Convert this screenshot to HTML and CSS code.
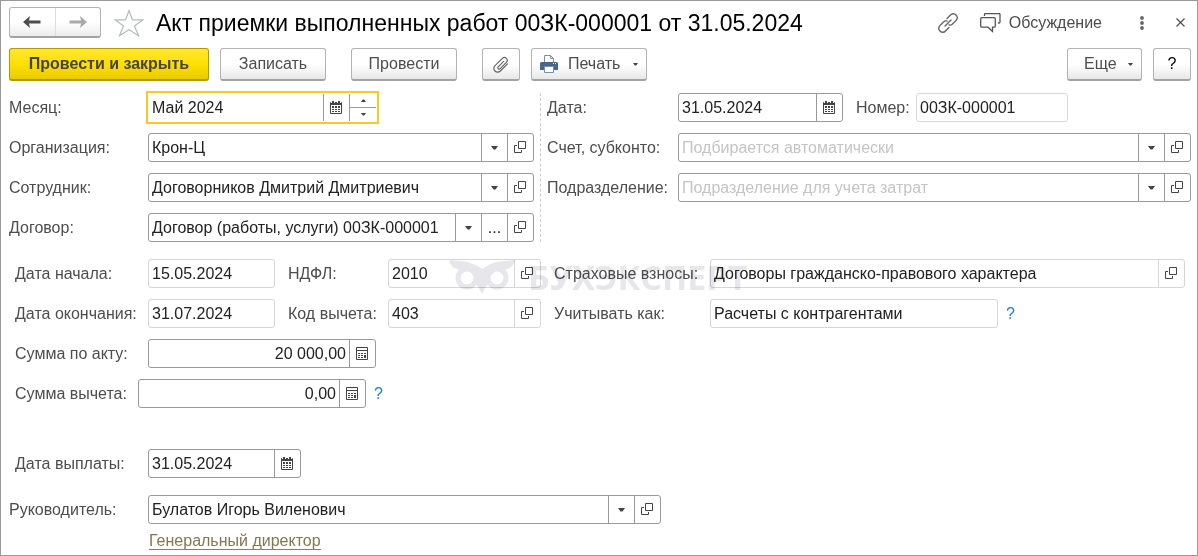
FILE: index.html
```html
<!DOCTYPE html>
<html lang="ru">
<head>
  <meta charset="UTF-8" />
  <meta name="viewport" content="width=device-width, initial-scale=1.0"/>
  <title>Акт приемки выполненных работ</title>
  <link rel="stylesheet" href="styles.css">
</head>
<body>
  <!-- shared icons -->
  <svg class="sprite" aria-hidden="true">
    <symbol id="i-calendar" viewBox="0 0 13 13">
      <path d="M1 1h10a1 1 0 0 1 1 1v10a1 1 0 0 1-1 1H1a1 1 0 0 1-1-1V2a1 1 0 0 1 1-1zM1 4v8h10V4z" fill="#444" fill-rule="evenodd"/>
      <path d="M2 0h2v2H2zM8 0h2v2H8z" fill="#444"/>
      <path d="M1 1h1v1H1zM4 1h1v1H4zM7 1h1v1H7zM10 1h1v1h-1z" fill="#fff"/>
      <path d="M2 5h2v2H2zM5 5h2v2H5zM8 5h2v2H8zM2 8h2v1H2zM5 8h2v1H5zM8 8h2v1H8zM2 10h2v1H2zM5 10h2v1H5zM8 10h2v1H8z" fill="#444"/>
    </symbol>
    <symbol id="i-calc" viewBox="0 0 13 13">
      <path d="M.5.500h11v12H.500z" fill="#fff" stroke="#444"/>
      <path d="M1 3h10v1H1zM2 6h2v1H2zM5 6h2v1H5zM8 6h2v1H8zM2 8h2v1H2zM5 8h2v1H5zM8 8h2v3H8zM2 10h2v1H2zM5 10h2v1H5z" fill="#444"/>
    </symbol>
    <symbol id="i-open" viewBox="0 0 13 13">
      <path d="M4.500.500h7v7h-7zM3 4.500H.500v7h7V9" fill="none" stroke="#444"/>
    </symbol>
    <symbol id="i-down" viewBox="0 0 7 4">
      <path d="M0 0h7L4.500 3.500h-2z" fill="#444"/>
    </symbol>
    <symbol id="i-arrow" viewBox="0 0 18 14">
      <path d="M0 7l7-6L6 5.500h11.500v3H6L7 13z" fill="currentColor"/>
    </symbol>
  </svg>

  <main class="window">
    <header class="titlebar">
      <div class="history">
        <button type="button" aria-label="Назад"><svg width="18" height="14"><use href="#i-arrow"/></svg></button>
        <button type="button" class="forward" aria-label="Вперед"><svg width="18" height="14"><use href="#i-arrow"/></svg></button>
      </div>
      <button type="button" class="plain star" aria-label="В избранное">
        <svg width="30" height="28" viewBox="0 0 30 28"><path d="M15 1.500l3.400 9.300h10.600l-8.600 6.100 4.200 9.800L15 20.700l-9.600 6 4.200-9.800L1 10.800h10.600z" fill="#fff" stroke="#b4bac2" stroke-width="1.200"/></svg>
      </button>
      <h1>Акт приемки выполненных работ 00ЗК-000001 от 31.05.2024</h1>
      <div class="title-tools">
        <button type="button" class="plain" aria-label="Ссылка">
          <svg width="20" height="20" viewBox="0 0 20 20" fill="none" stroke="#666" stroke-width="1.400" stroke-linecap="round"><path d="M9 5.500l3.500-3.500a3.600 3.600 0 0 1 5.500 0 3.600 3.600 0 0 1 0 5.500L14.500 11a3.600 3.600 0 0 1-3.500 1M11 14.500L7.500 18A3.600 3.600 0 0 1 2 18a3.600 3.600 0 0 1 0-5.500L5.500 9A3.600 3.600 0 0 1 9 8M7 13l6-6"/></svg>
        </button>
        <button type="button" class="plain talk">
          <svg width="21" height="20" viewBox="0 0 21 20" fill="none" stroke="#555" stroke-width="1.300"><path d="M4.500 3V1.500a1 1 0 0 1 1-1H19a1 1 0 0 1 1 1V9a1 1 0 0 1-1 1h-1"/><path d="M2 4.600h12a1.300 1.300 0 0 1 1.300 1.300v7a1.300 1.300 0 0 1-1.300 1.300h-1.500v4.300L8 14.200H2A1.300 1.300 0 0 1 .700 12.900v-7A1.300 1.300 0 0 1 2 4.600z"/></svg>
          Обсуждение
        </button>
        <button type="button" class="plain dots" aria-label="Меню">
          <svg width="4" height="14" viewBox="0 0 4 14" fill="#666"><circle cx="2" cy="2" r="1.900"/><circle cx="2" cy="7" r="1.900"/><circle cx="2" cy="12" r="1.900"/></svg>
        </button>
        <button type="button" class="plain close" aria-label="Закрыть">
          <svg width="9" height="9" viewBox="0 0 9 9" stroke="#555" stroke-width="1.300"><path d="M.5.500l8 8M8.500.500l-8 8"/></svg>
        </button>
      </div>
    </header>

    <div class="toolbar">
      <button type="button" class="btn primary">Провести и закрыть</button>
      <button type="button" class="btn">Записать</button>
      <button type="button" class="btn spaced">Провести</button>
      <button type="button" class="btn icon spaced" aria-label="Файлы">
        <svg width="16" height="17" viewBox="0 0 16 17" fill="none" stroke="#666" stroke-width="1.200" stroke-linecap="round"><path d="M10.600 5.400l-5.400 5.400a1.300 1.300 0 0 0 2 1.800l6.200-6.300a2.800 2.800 0 0 0-4-4L2 9.600a3.800 3.800 0 0 0 5.400 5.400l7.100-7.200"/></svg>
      </button>
      <button type="button" class="btn print">
        <svg width="18" height="18" viewBox="0 0 18 18"><path d="M4.500 8V.500h6l3 3V8" fill="#fff" stroke="#7b8ea3"/><path d="M10.500.500v3h3" fill="none" stroke="#7b8ea3"/><path d="M1.500 7h15A1.500 1.500 0 0 1 18 8.500V15H0V8.500A1.500 1.500 0 0 1 1.500 7z" fill="#44688f"/><path d="M13 8h1v1h-1zM15 8h1v1h-1z" fill="#fff"/><path d="M4.500 11.500h9v6h-9z" fill="#fff" stroke="#7b8ea3"/></svg>
        <span>Печать</span>
        <svg class="caret" width="5" height="3" viewBox="0 0 7 4"><use href="#i-down"/></svg>
      </button>
      <button type="button" class="btn more">
        <span>Еще</span>
        <svg class="caret" width="5" height="3" viewBox="0 0 7 4"><use href="#i-down"/></svg>
      </button>
      <button type="button" class="btn icon help">?</button>
    </div>

    <form>
      <div class="columns">
        <div class="col left">
          <div class="row">
            <label for="month">Месяц:</label>
            <div class="field month focused">
              <input type="text" id="month" value="Май 2024">
              <button type="button" aria-label="Календарь"><svg width="13" height="13"><use href="#i-calendar"/></svg></button>
              <div class="spin">
                <button type="button" aria-label="Больше"><svg class="up" width="5" height="3" viewBox="0 0 7 4"><use href="#i-down"/></svg></button>
                <button type="button" aria-label="Меньше"><svg width="5" height="3" viewBox="0 0 7 4"><use href="#i-down"/></svg></button>
              </div>
            </div>
          </div>
          <div class="row">
            <label for="org">Организация:</label>
            <div class="field wide">
              <input type="text" id="org" value="Крон-Ц">
              <button type="button" aria-label="Выбрать"><svg width="7" height="4"><use href="#i-down"/></svg></button>
              <button type="button" aria-label="Открыть"><svg width="13" height="13"><use href="#i-open"/></svg></button>
            </div>
          </div>
          <div class="row">
            <label for="employee">Сотрудник:</label>
            <div class="field wide">
              <input type="text" id="employee" value="Договорников Дмитрий Дмитриевич">
              <button type="button" aria-label="Выбрать"><svg width="7" height="4"><use href="#i-down"/></svg></button>
              <button type="button" aria-label="Открыть"><svg width="13" height="13"><use href="#i-open"/></svg></button>
            </div>
          </div>
          <div class="row">
            <label for="contract">Договор:</label>
            <div class="field wide">
              <input type="text" id="contract" value="Договор (работы, услуги) 00ЗК-000001">
              <button type="button" aria-label="Выбрать"><svg width="7" height="4"><use href="#i-down"/></svg></button>
              <button type="button" aria-label="Показать все">...</button>
              <button type="button" aria-label="Открыть"><svg width="13" height="13"><use href="#i-open"/></svg></button>
            </div>
          </div>
        </div>

        <div class="col right">
          <div class="row">
            <label for="date">Дата:</label>
            <div class="field date">
              <input type="text" id="date" value="31.05.2024">
              <button type="button" aria-label="Календарь"><svg width="13" height="13"><use href="#i-calendar"/></svg></button>
            </div>
            <label for="number" class="inline">Номер:</label>
            <div class="field number readonly">
              <input type="text" id="number" value="00ЗК-000001" readonly>
            </div>
          </div>
          <div class="row">
            <label for="account">Счет, субконто:</label>
            <div class="field wide">
              <input type="text" id="account" placeholder="Подбирается автоматически">
              <button type="button" aria-label="Выбрать"><svg width="7" height="4"><use href="#i-down"/></svg></button>
              <button type="button" aria-label="Открыть"><svg width="13" height="13"><use href="#i-open"/></svg></button>
            </div>
          </div>
          <div class="row">
            <label for="department">Подразделение:</label>
            <div class="field wide">
              <input type="text" id="department" placeholder="Подразделение для учета затрат">
              <button type="button" aria-label="Выбрать"><svg width="7" height="4"><use href="#i-down"/></svg></button>
              <button type="button" aria-label="Открыть"><svg width="13" height="13"><use href="#i-open"/></svg></button>
            </div>
          </div>
        </div>
      </div>

      <div class="details">
        <div class="grid">
          <label for="start">Дата начала:</label>
          <div class="field readonly"><input type="text" id="start" value="15.05.2024" readonly></div>
          <label for="ndfl" class="next">НДФЛ:</label>
          <div class="field readonly">
            <input type="text" id="ndfl" value="2010" readonly>
            <button type="button" aria-label="Открыть"><svg width="13" height="13"><use href="#i-open"/></svg></button>
          </div>
          <label for="insurance" class="next">Страховые взносы:</label>
          <div class="field readonly">
            <input type="text" id="insurance" value="Договоры гражданско-правового характера" readonly>
            <button type="button" aria-label="Открыть"><svg width="13" height="13"><use href="#i-open"/></svg></button>
          </div>

          <label for="end">Дата окончания:</label>
          <div class="field readonly"><input type="text" id="end" value="31.07.2024" readonly></div>
          <label for="code" class="next">Код вычета:</label>
          <div class="field readonly">
            <input type="text" id="code" value="403" readonly>
            <button type="button" aria-label="Открыть"><svg width="13" height="13"><use href="#i-open"/></svg></button>
          </div>
          <label for="account-as" class="next">Учитывать как:</label>
          <div class="with-hint">
            <div class="field account-as readonly"><input type="text" id="account-as" value="Расчеты с контрагентами" readonly></div>
            <a href="#" class="hint">?</a>
          </div>
        </div>

        <div class="row">
          <label for="sum">Сумма по акту:</label>
          <div class="field sum">
            <input type="text" id="sum" value="20 000,00">
            <button type="button" aria-label="Калькулятор"><svg width="13" height="13"><use href="#i-calc"/></svg></button>
          </div>
        </div>
        <div class="row deduction">
          <label for="deduction">Сумма вычета:</label>
          <div class="field sum">
            <input type="text" id="deduction" value="0,00">
            <button type="button" aria-label="Калькулятор"><svg width="13" height="13"><use href="#i-calc"/></svg></button>
          </div>
          <a href="#" class="hint">?</a>
        </div>
        <div class="row payday">
          <label for="payday">Дата выплаты:</label>
          <div class="field pay">
            <input type="text" id="payday" value="31.05.2024">
            <button type="button" aria-label="Календарь"><svg width="13" height="13"><use href="#i-calendar"/></svg></button>
          </div>
        </div>

        <div class="watermark" aria-hidden="true">
          <svg width="66" height="34" viewBox="0 0 66 34" fill="#e6e6eb"><path d="M0 0c8 1 22 0 33 9C44 0 58 1 66 0c-1 5-4 8-8 9l-16 9c-1 6-5 8-6 10l-3 6-3-6c-1-2-5-4-6-10L8 9C4 8 1 5 0 0z"/><circle cx="18" cy="18" r="9" fill="#fff" stroke="#e6e6eb" stroke-width="5"/><circle cx="48" cy="18" r="9" fill="#fff" stroke="#e6e6eb" stroke-width="5"/></svg>
          <span>БУХЭКСПЕРТ</span>
        </div>
      </div>

      <div class="row manager">
        <label for="manager">Руководитель:</label>
        <div class="field">
          <input type="text" id="manager" value="Булатов Игорь Виленович">
          <button type="button" aria-label="Выбрать"><svg width="7" height="4"><use href="#i-down"/></svg></button>
          <button type="button" aria-label="Открыть"><svg width="13" height="13"><use href="#i-open"/></svg></button>
        </div>
      </div>
      <a href="#" class="position">Генеральный директор</a>
    </form>
  </main>
</body>
</html>
```
FILE: styles.css
```css
:root {
  --text: #222;
  --label: #4d4d4d;
  --line: #999;
  --line-light: #d6d6d6;
  --accent: #f9cb22;
  --link: #1a7fc4;
}

* {
  box-sizing: border-box;
}

body {
  margin: 0;
  background: #fff;
  color: var(--text);
  font-family: "Liberation Sans", Arial, sans-serif;
  font-size: 16px;
}

button,
input {
  font: inherit;
  color: inherit;
}

button {
  cursor: pointer;
}

svg {
  display: block;
  flex: none;
}

.sprite {
  position: absolute;
  width: 0;
  height: 0;
}

.window {
  min-height: 100vh;
  padding: 6px 6px 4px 8px;
  border: 1px solid #999;
}

/* title bar */
.titlebar {
  display: flex;
  align-items: center;
  height: 31px;
}

.history {
  display: flex;
  width: 92px;
  height: 31px;
  border: 1px solid #b3b3b3;
  border-bottom: 2px solid #a3a3a3;
  border-radius: 3px;
  background: linear-gradient(#fff 50%, #ececec);
}

.history button {
  flex: 1;
  display: flex;
  align-items: center;
  justify-content: center;
  padding: 0;
  border: none;
  background: none;
  color: #4d4d4d;
}

.history .forward {
  border-left: 1px solid #ddd;
  color: #aaa;
}

.history .forward svg {
  transform: scaleX(-1);
}

.plain {
  display: flex;
  align-items: center;
  padding: 0;
  border: none;
  background: none;
  color: var(--label);
}

.star {
  margin-left: 13px;
}

h1 {
  flex: 1;
  margin: 0 0 0 12px;
  color: #000;
  font-size: 23px;
  font-weight: normal;
  line-height: 28px;
  white-space: nowrap;
}

.title-tools {
  display: flex;
  align-items: center;
  gap: 22px;
  padding-right: 6px;
}

.talk {
  gap: 8px;
}

.dots {
  margin-left: 16px;
}

.close {
  margin-left: 10px;
}

/* command bar */
.toolbar {
  display: flex;
  gap: 11px;
  margin-top: 10px;
}

.btn {
  display: flex;
  align-items: center;
  justify-content: center;
  min-width: 106px;
  height: 33px;
  padding: 0 16px;
  border: 1px solid #b3b3b3;
  border-bottom: 2px solid #a3a3a3;
  border-radius: 3px;
  background: linear-gradient(#fff 50%, #e8e8e8);
  color: var(--label);
}

.btn.primary {
  min-width: 200px;
  border-color: #b09a00;
  background: linear-gradient(#ffe733, #ffe000 50%, #e8cb00);
  color: #444;
  font-weight: bold;
}

.btn.spaced {
  margin-left: 14px;
}

.btn.icon {
  min-width: 38px;
  padding: 0;
}

.btn.print {
  gap: 10px;
  min-width: 116px;
  padding: 0 8px;
}

.btn.more {
  min-width: 75px;
  margin-left: auto;
  padding-right: 8px;
}

.caret {
  margin-left: auto;
}

.btn.help {
  color: #000;
}

/* fields */
.columns {
  display: flex;
  margin-top: 12px;
}

.col {
  display: flex;
  flex-direction: column;
  gap: 11px;
}

.left {
  flex: none;
  width: 532px;
  padding-right: 6px;
  border-right: 1px dashed #ccc;
}

.right {
  flex: 1;
  padding-left: 6px;
}

.row {
  display: flex;
  align-items: center;
}

label {
  flex: none;
  color: var(--label);
  line-height: 20px;
  white-space: nowrap;
}

.left label,
.manager label {
  width: 139px;
}

.right label {
  width: 131px;
}

.right .inline {
  width: 60px;
  margin-left: 13px;
}

.field {
  display: flex;
  height: 29px;
  border: 1px solid var(--line);
  border-radius: 3px;
  background: #fff;
}

.field input {
  flex: 1;
  min-width: 0;
  width: 100%;
  padding: 0 3px;
  border: none;
  outline: none;
  background: none;
}

.field input::placeholder {
  color: #c4c4c4;
}

.field button {
  flex: none;
  display: flex;
  align-items: center;
  justify-content: center;
  width: 26px;
  padding: 0;
  border: none;
  border-left: 1px solid var(--line);
  background: none;
}

.field.readonly,
.readonly button {
  border-color: var(--line-light);
}

.wide {
  flex: 1;
}

.month {
  width: 229px;
}

.focused {
  border-color: #fff;
  border-radius: 0;
  outline: 2px solid var(--accent);
}

.spin {
  display: flex;
  flex-direction: column;
  border-left: 1px solid var(--line);
}

.field .spin button {
  flex: 1;
  border: none;
}

.field .spin button + button {
  border-top: 1px solid var(--line);
}

.up {
  transform: rotate(180deg);
}

.date {
  width: 165px;
}

.number {
  width: 152px;
}

/* contract details */
.details {
  position: relative;
  display: flex;
  flex-direction: column;
  gap: 11px;
  margin-top: 17px;
  padding: 0 6px;
}

.grid {
  display: grid;
  grid-template-columns: 133px 127px 113px 153px 169px 1fr;
  row-gap: 11px;
  align-items: center;
}

.next {
  padding-left: 13px;
}

.details .row label {
  width: 133px;
}

.details .deduction label {
  width: 123px;
}

.sum {
  width: 228px;
}

.sum input {
  text-align: right;
}

.with-hint {
  display: flex;
  align-items: center;
}

.account-as {
  width: 288px;
}

.hint {
  margin-left: 8px;
  color: var(--link);
  text-decoration: none;
}

.payday {
  margin-top: 30px;
}

.pay {
  width: 153px;
}

.watermark {
  position: absolute;
  top: 0;
  left: 440px;
  display: flex;
  align-items: center;
  gap: 13px;
  height: 36px;
  color: #e6e6eb;
  font-family: "Open Sans", sans-serif;
  font-size: 34px;
  font-weight: bold;
  line-height: 36px;
  mix-blend-mode: multiply;
  pointer-events: none;
}

.manager {
  margin-top: 17px;
}

.manager .field {
  width: 513px;
}

.position {
  display: inline-block;
  margin: 8px 0 0 140px;
  border-bottom: 1px solid #84845a;
  color: #84764f;
  line-height: 17px;
  text-decoration: none;
}
```
